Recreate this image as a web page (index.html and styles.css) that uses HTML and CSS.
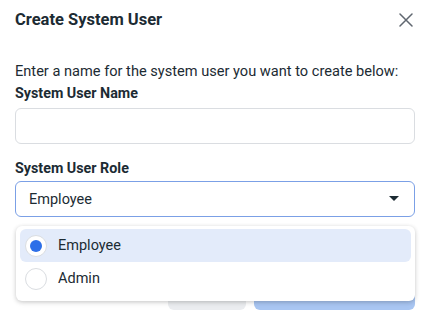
FILE: index.html
```html
<!DOCTYPE html>
<html lang="en">
<head>
    <meta charset="UTF-8">
    <title>Create System User</title>
    <link rel="stylesheet" href="styles.css">
</head>
<body>
    <div class="dialog">
        <div class="header">
            <h1>Create System User</h1>
            <button class="close" aria-label="Close">
                <svg width="14" height="14" viewBox="0 0 14 14">
                    <path d="M1 1L13 13M13 1L1 13" stroke="#606770" stroke-width="1.5" stroke-linecap="round"/>
                </svg>
            </button>
        </div>
        <p class="intro">Enter a name for the system user you want to create below:</p>
        <label class="label">System User Name</label>
        <input class="field" type="text">
        <label class="label">System User Role</label>
        <div class="select-wrap">
            <div class="select">
                <span>Employee</span>
                <svg width="10" height="6" viewBox="0 0 10 6"><path d="M0 0H10L5 5Z" fill="#1c2b33"/></svg>
            </div>
            <div class="menu">
                <div class="option selected">
                    <span class="radio"><span class="dot"></span></span>
                    Employee
                </div>
                <div class="option">
                    <span class="radio"></span>
                    Admin
                </div>
            </div>
        </div>
        <div class="footer">
            <button class="btn cancel">Cancel</button>
            <button class="btn primary">Create System User</button>
        </div>
    </div>
</body>
</html>
```
FILE: styles.css
```css
body {
    margin: 0;
    background-color: white;
    font-family: Roboto, 'Liberation Sans', sans-serif;
    color: #1c2b33;
    overflow: hidden;
}
.dialog {
    padding: 0 15px;
}
.header {
    display: flex;
    justify-content: space-between;
    align-items: center;
    padding-top: 10px;
    height: 20px;
}
.header h1 {
    margin: 0;
    font-size: 16.5px;
    font-weight: 700;
    line-height: 20px;
}
.close {
    border: none;
    background: none;
    padding: 0;
    margin-right: 2px;
    width: 14px;
    height: 14px;
    display: flex;
}
.intro {
    margin: 30px 0 0;
    font-size: 14.6px;
    line-height: 23px;
}
.label {
    display: block;
    font-size: 14.3px;
    font-weight: 700;
    line-height: 20px;
}
.field {
    display: block;
    box-sizing: border-box;
    width: 100%;
    height: 36px;
    margin: 5px 0 14px;
    border: 1px solid #dadde1;
    border-radius: 6px;
}
.select-wrap {
    position: relative;
    margin-top: 3px;
}
.select {
    box-sizing: border-box;
    height: 36px;
    border: 1px solid #7ba0e6;
    border-radius: 6px;
    display: flex;
    justify-content: space-between;
    align-items: center;
    padding: 0 15px 0 13px;
    font-size: 14.5px;
}
.menu {
    position: absolute;
    top: 45px;
    left: 1px;
    right: 0;
    background-color: white;
    border-radius: 6px;
    box-shadow: 0 1px 4px rgba(0,0,0,0.18), 0 2px 6px rgba(0,0,0,0.06);
    padding: 3px 4px 6px;
    z-index: 2;
}
.option {
    display: flex;
    align-items: center;
    gap: 11px;
    height: 33px;
    padding-left: 5px;
    border-radius: 6px;
    font-size: 14.5px;
}
.option.selected {
    background-color: #e3ebfa;
}
.radio {
    box-sizing: border-box;
    width: 22px;
    height: 22px;
    border-radius: 50%;
    border: 1px solid #dadde1;
    background-color: white;
    display: flex;
    justify-content: center;
    align-items: center;
}
.dot {
    width: 12px;
    height: 12px;
    border-radius: 50%;
    background-color: #2d6fe8;
}
.footer {
    display: flex;
    justify-content: flex-end;
    gap: 8px;
    margin-top: 57px;
}
.btn {
    height: 36px;
    border: none;
    border-radius: 6px;
    font-family: inherit;
    font-size: 14px;
    font-weight: 700;
}
.cancel {
    width: 78px;
    background-color: #ebedf0;
    color: #1c2b33;
}
.primary {
    width: 161px;
    background-color: #a9c6f2;
    color: white;
}
```
